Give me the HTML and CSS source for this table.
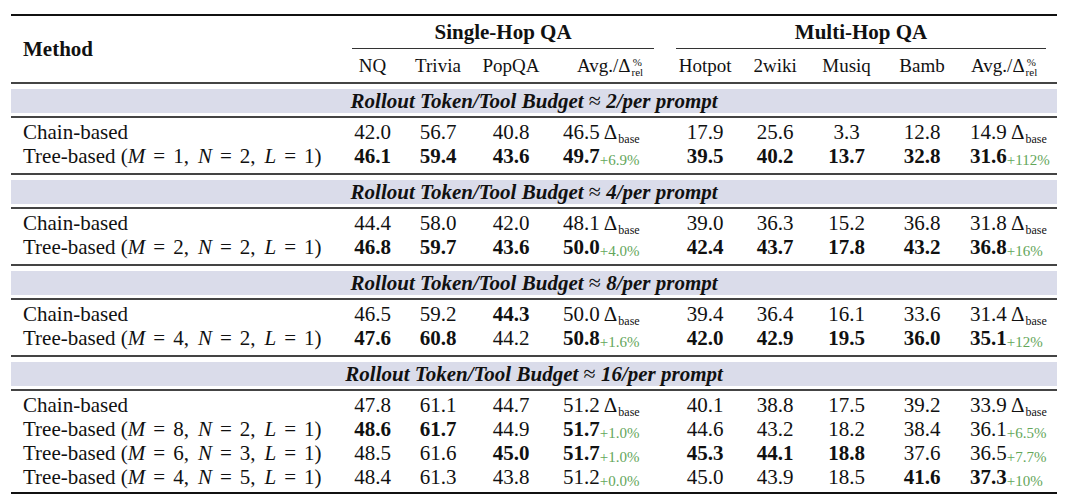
FILE: index.html
```html
<!DOCTYPE html>
<html lang="en">
<head>
<meta charset="utf-8">
<title>Chain vs Tree rollout results</title>
<link rel="stylesheet" href="styles.css">
</head>
<body>
<table class="results">
  <colgroup>
    <col class="c-method"><col class="c-nq"><col class="c-trivia"><col class="c-popqa"><col class="c-avg1">
    <col class="c-hotpot"><col class="c-2wiki"><col class="c-musiq"><col class="c-bamb"><col class="c-avg2">
  </colgroup>
  <thead>
    <tr class="groups">
      <th rowspan="2" class="method">Method</th>
      <th colspan="4"><div class="group group-single">Single-Hop QA</div></th>
      <th colspan="5"><div class="group group-multi">Multi-Hop QA</div></th>
    </tr>
    <tr class="cols">
      <th>NQ</th><th>Trivia</th><th>PopQA</th>
      <th class="avg-head avg-head-1">Avg./Δ<span class="scripts"><span>%</span><span>rel</span></span></th>
      <th>Hotpot</th><th>2wiki</th><th>Musiq</th><th>Bamb</th>
      <th class="avg-head avg-head-2">Avg./Δ<span class="scripts"><span>%</span><span>rel</span></span></th>
    </tr>
  </thead>

  <tbody>
    <tr class="band"><td colspan="10"><div class="band-label">Rollout Token/Tool Budget <span class="approx">≈</span> 2/per prompt</div></td></tr>
    <tr class="first">
      <td class="label">Chain-based</td>
      <td class="num">42.0</td><td class="num">56.7</td><td class="num">40.8</td>
      <td class="avg avg1">46.5 Δ<span class="sub">base</span></td>
      <td class="num">17.9</td><td class="num">25.6</td><td class="num">3.3</td><td class="num">12.8</td>
      <td class="avg avg2">14.9 Δ<span class="sub">base</span></td>
    </tr>
    <tr class="last">
      <td class="label">Tree-based (<i>M</i><span class="eq">=</span>1,<span class="sep"></span><i>N</i><span class="eq">=</span>2,<span class="sep"></span><i>L</i><span class="eq">=</span>1)</td>
      <td class="num"><b>46.1</b></td><td class="num"><b>59.4</b></td><td class="num"><b>43.6</b></td>
      <td class="avg avg1"><b>49.7</b><span class="gain">+6.9%</span></td>
      <td class="num"><b>39.5</b></td><td class="num"><b>40.2</b></td><td class="num"><b>13.7</b></td><td class="num"><b>32.8</b></td>
      <td class="avg avg2"><b>31.6</b><span class="gain">+112%</span></td>
    </tr>
  </tbody>

  <tbody>
    <tr class="band"><td colspan="10"><div class="band-label">Rollout Token/Tool Budget <span class="approx">≈</span> 4/per prompt</div></td></tr>
    <tr class="first">
      <td class="label">Chain-based</td>
      <td class="num">44.4</td><td class="num">58.0</td><td class="num">42.0</td>
      <td class="avg avg1">48.1 Δ<span class="sub">base</span></td>
      <td class="num">39.0</td><td class="num">36.3</td><td class="num">15.2</td><td class="num">36.8</td>
      <td class="avg avg2">31.8 Δ<span class="sub">base</span></td>
    </tr>
    <tr class="last">
      <td class="label">Tree-based (<i>M</i><span class="eq">=</span>2,<span class="sep"></span><i>N</i><span class="eq">=</span>2,<span class="sep"></span><i>L</i><span class="eq">=</span>1)</td>
      <td class="num"><b>46.8</b></td><td class="num"><b>59.7</b></td><td class="num"><b>43.6</b></td>
      <td class="avg avg1"><b>50.0</b><span class="gain">+4.0%</span></td>
      <td class="num"><b>42.4</b></td><td class="num"><b>43.7</b></td><td class="num"><b>17.8</b></td><td class="num"><b>43.2</b></td>
      <td class="avg avg2"><b>36.8</b><span class="gain">+16%</span></td>
    </tr>
  </tbody>

  <tbody>
    <tr class="band"><td colspan="10"><div class="band-label">Rollout Token/Tool Budget <span class="approx">≈</span> 8/per prompt</div></td></tr>
    <tr class="first">
      <td class="label">Chain-based</td>
      <td class="num">46.5</td><td class="num">59.2</td><td class="num"><b>44.3</b></td>
      <td class="avg avg1">50.0 Δ<span class="sub">base</span></td>
      <td class="num">39.4</td><td class="num">36.4</td><td class="num">16.1</td><td class="num">33.6</td>
      <td class="avg avg2">31.4 Δ<span class="sub">base</span></td>
    </tr>
    <tr class="last">
      <td class="label">Tree-based (<i>M</i><span class="eq">=</span>4,<span class="sep"></span><i>N</i><span class="eq">=</span>2,<span class="sep"></span><i>L</i><span class="eq">=</span>1)</td>
      <td class="num"><b>47.6</b></td><td class="num"><b>60.8</b></td><td class="num">44.2</td>
      <td class="avg avg1"><b>50.8</b><span class="gain">+1.6%</span></td>
      <td class="num"><b>42.0</b></td><td class="num"><b>42.9</b></td><td class="num"><b>19.5</b></td><td class="num"><b>36.0</b></td>
      <td class="avg avg2"><b>35.1</b><span class="gain">+12%</span></td>
    </tr>
  </tbody>

  <tbody class="final">
    <tr class="band"><td colspan="10"><div class="band-label">Rollout Token/Tool Budget <span class="approx">≈</span> 16/per prompt</div></td></tr>
    <tr class="first">
      <td class="label">Chain-based</td>
      <td class="num">47.8</td><td class="num">61.1</td><td class="num">44.7</td>
      <td class="avg avg1">51.2 Δ<span class="sub">base</span></td>
      <td class="num">40.1</td><td class="num">38.8</td><td class="num">17.5</td><td class="num">39.2</td>
      <td class="avg avg2">33.9 Δ<span class="sub">base</span></td>
    </tr>
    <tr>
      <td class="label">Tree-based (<i>M</i><span class="eq">=</span>8,<span class="sep"></span><i>N</i><span class="eq">=</span>2,<span class="sep"></span><i>L</i><span class="eq">=</span>1)</td>
      <td class="num"><b>48.6</b></td><td class="num"><b>61.7</b></td><td class="num">44.9</td>
      <td class="avg avg1"><b>51.7</b><span class="gain">+1.0%</span></td>
      <td class="num">44.6</td><td class="num">43.2</td><td class="num">18.2</td><td class="num">38.4</td>
      <td class="avg avg2">36.1<span class="gain">+6.5%</span></td>
    </tr>
    <tr>
      <td class="label">Tree-based (<i>M</i><span class="eq">=</span>6,<span class="sep"></span><i>N</i><span class="eq">=</span>3,<span class="sep"></span><i>L</i><span class="eq">=</span>1)</td>
      <td class="num">48.5</td><td class="num">61.6</td><td class="num"><b>45.0</b></td>
      <td class="avg avg1"><b>51.7</b><span class="gain">+1.0%</span></td>
      <td class="num"><b>45.3</b></td><td class="num"><b>44.1</b></td><td class="num"><b>18.8</b></td><td class="num">37.6</td>
      <td class="avg avg2">36.5<span class="gain">+7.7%</span></td>
    </tr>
    <tr class="last">
      <td class="label">Tree-based (<i>M</i><span class="eq">=</span>4,<span class="sep"></span><i>N</i><span class="eq">=</span>5,<span class="sep"></span><i>L</i><span class="eq">=</span>1)</td>
      <td class="num">48.4</td><td class="num">61.3</td><td class="num">43.8</td>
      <td class="avg avg1">51.2<span class="gain">+0.0%</span></td>
      <td class="num">45.0</td><td class="num">43.9</td><td class="num">18.5</td><td class="num"><b>41.6</b></td>
      <td class="avg avg2"><b>37.3</b><span class="gain">+10%</span></td>
    </tr>
  </tbody>
</table>
</body>
</html>
```

FILE: styles.css
```css
* { box-sizing: border-box; }

html, body {
  margin: 0;
  background: #ffffff;
}

body {
  padding: 14px 0 0 11px;
  font-family: "Liberation Serif", "Times New Roman", serif;
  color: #111111;
}

.results {
  border-collapse: collapse;
  table-layout: fixed;
  width: 1046px;
  font-size: 21px;
}

.results th,
.results td {
  padding: 0;
  line-height: 24px;
  white-space: nowrap;
}

.c-method { width: 334px; }
.c-nq { width: 55px; }
.c-trivia { width: 76px; }
.c-popqa { width: 70px; }
.c-avg1 { width: 119px; }
.c-hotpot { width: 80px; }
.c-2wiki { width: 60px; }
.c-musiq { width: 83px; }
.c-bamb { width: 68px; }
.c-avg2 { width: 101px; }

/* header */
.groups th {
  border-top: 2px solid #111111;
  font-weight: bold;
}

.results th.method {
  text-align: left;
  padding-left: 12px;
  vertical-align: middle;
}

.group {
  padding: 4px 0;
  text-align: center;
  border-bottom: 1px solid #333333;
}

.group-single { margin: 0 11px 0 7px; }
.group-multi { margin: 0 11px 0 11px; }

.results .cols th {
  font-size: 19px;
  font-weight: normal;
  text-align: center;
  padding: 5px 0 4px;
}

.results .cols th.avg-head { text-align: left; }
.results .cols th.avg-head-1 { padding-left: 31px; }
.results .cols th.avg-head-2 { padding-left: 15px; }

.scripts {
  display: inline-flex;
  flex-direction: column;
  align-items: center;
  vertical-align: top;
  height: 24px;
  padding-top: 3px;
  font-size: 11px;
  line-height: 10px;
  margin-left: 1px;
}

/* bands */
.results .band td {
  padding: 5px 0 3px;
  border-top: 2px solid #444444;
  border-bottom: 2px solid #444444;
}

.band-label {
  background: #dadcea;
  height: 24px;
  line-height: 24px;
  text-align: center;
  font-weight: bold;
  font-style: italic;
}

.approx {
  font-style: normal;
  font-weight: normal;
  font-size: 22px;
}

/* body rows */
.results .first td { padding-top: 2px; }
.results .last td { padding-bottom: 5px; }
.results .final .last td {
  padding-bottom: 3px;
  border-bottom: 2px solid #111111;
}

.results td.label {
  padding-left: 12px;
  text-align: left;
}

.label i { font-style: italic; }

.eq { margin: 0 8px; }
.sep { display: inline-block; width: 9px; }

.num { text-align: center; }

.results td.avg { text-align: left; }
.results td.avg1 { padding-left: 17px; }
.results td.avg2 { padding-left: 14px; }

.sub {
  font-size: 12px;
  line-height: 10px;
  vertical-align: -4px;
  margin-left: 1px;
}

.gain {
  font-size: 15px;
  line-height: 10px;
  vertical-align: -2px;
  color: #64a65a;
}
```
